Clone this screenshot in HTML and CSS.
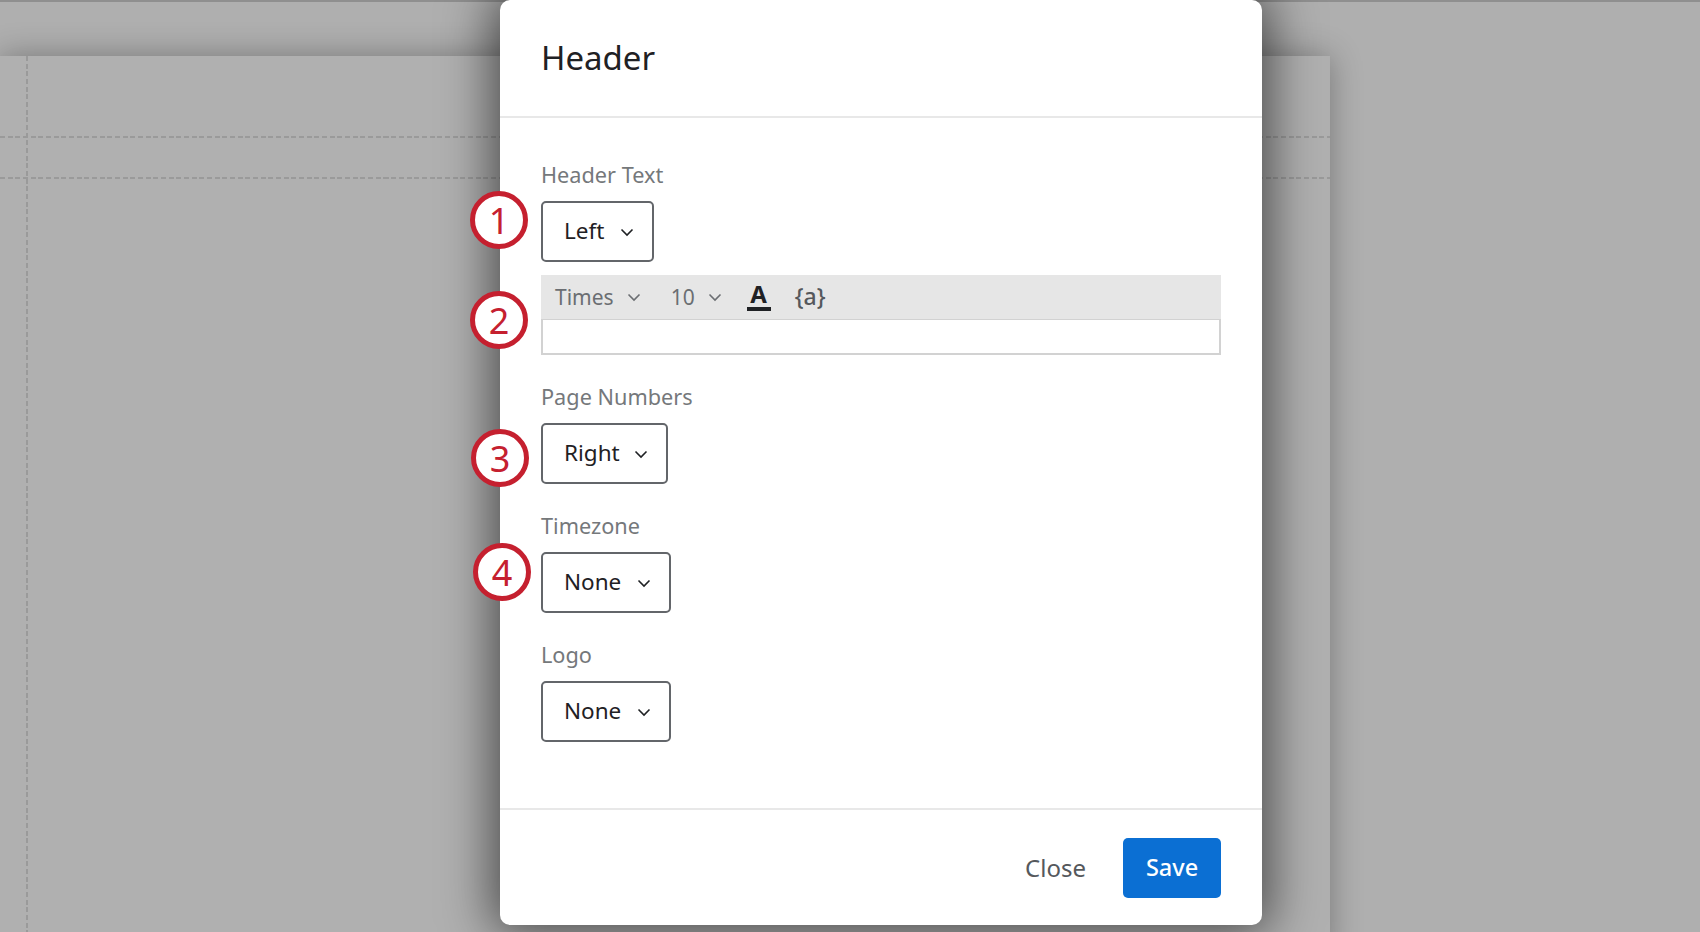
FILE: index.html
```html
<!DOCTYPE html>
<html lang="en">
<head>
<meta charset="utf-8">
<title>Header</title>
<link rel="stylesheet" href="styles.css">
</head>
<body>
<div class="stage">
  <div class="paper">
    <div class="guide-row guide-row-a"></div>
    <div class="guide-row guide-row-b"></div>
    <div class="guide-col"></div>
  </div>
</div>
<div class="modal">
  <header class="modal-head"><h1 class="modal-title">Header</h1></header>
  <main class="modal-body">
    <div class="field">
      <div class="label">Header Text</div>
      <button class="select select-left"><span>Left</span><svg class="chev" viewBox="0 0 14 9"><path d="M1.500 1.500 7 7l5.500-5.500"/></svg></button>
      <div class="editor">
        <div class="toolbar">
          <span class="tool tool-font">Times<svg class="chev chev-grey" viewBox="0 0 14 9"><path d="M1.500 1.500 7 7l5.500-5.500"/></svg></span>
          <span class="tool tool-size">10<svg class="chev chev-grey" viewBox="0 0 14 9"><path d="M1.500 1.500 7 7l5.500-5.500"/></svg></span>
          <span class="tool-color">A</span>
          <span class="tool-piped">{a}</span>
        </div>
        <div class="editor-input"></div>
      </div>
    </div>
    <div class="field">
      <div class="label">Page Numbers</div>
      <button class="select select-right"><span>Right</span><svg class="chev" viewBox="0 0 14 9"><path d="M1.500 1.500 7 7l5.500-5.500"/></svg></button>
    </div>
    <div class="field">
      <div class="label">Timezone</div>
      <button class="select select-none"><span>None</span><svg class="chev" viewBox="0 0 14 9"><path d="M1.500 1.500 7 7l5.500-5.500"/></svg></button>
    </div>
    <div class="field">
      <div class="label">Logo</div>
      <button class="select select-none"><span>None</span><svg class="chev" viewBox="0 0 14 9"><path d="M1.500 1.500 7 7l5.500-5.500"/></svg></button>
    </div>
  </main>
  <footer class="modal-foot">
    <button class="btn-close">Close</button>
    <button class="btn-save">Save</button>
  </footer>
</div>
<div class="callout callout-1">1</div>
<div class="callout callout-2">2</div>
<div class="callout callout-3">3</div>
<div class="callout callout-4">4</div>
</body>
</html>
```
FILE: styles.css
```css
* { box-sizing: border-box; }
html, body { margin: 0; height: 100%; overflow: hidden; }
body { font-family: "Noto Sans", "Open Sans", sans-serif; background: #afafaf; position: relative; }
.stage { height: 932px; border-top: 2px solid #8f8f8f; padding-top: 54px; overflow: hidden; }
.paper { position: relative; width: 1330px; height: 900px; background: #b0b0b0; box-shadow: 0 0 30px rgba(0,0,0,.32); }
.guide-row { position: absolute; left: 0; right: 0; height: 2px; background: repeating-linear-gradient(90deg, #9a9a9a 0 5px, transparent 5px 7.670px); }
.guide-row-a { top: 80px; }
.guide-row-b { top: 121px; }
.guide-col { position: absolute; top: 0; bottom: 0; left: 26px; width: 2px; background: repeating-linear-gradient(180deg, #9a9a9a 0 5px, transparent 5px 7.670px); }

.modal { position: absolute; left: 500px; top: 0; width: 762px; height: 925px; background: #fff; border-radius: 10px; box-shadow: 0 0 50px 8px rgba(0,0,0,.58); display: flex; flex-direction: column; }
.modal-head { height: 118px; border-bottom: 2px solid #e8e8e8; padding: 0 41px 1px; display: flex; align-items: center; }
.modal-title { margin: 0; font-size: 33px; font-weight: 400; color: #1f2124; }
.modal-body { flex: 1; padding: 40px 41px 0; }
.modal-foot { height: 117px; border-top: 2px solid #e8e8e8; padding: 28px 41px 0; display: flex; justify-content: flex-end; align-items: flex-start; gap: 37px; }

.field { margin-bottom: 25px; }
.label { font-size: 21.700px; line-height: 34px; color: #75787b; margin-bottom: 9px; }
.select { height: 61px; display: flex; align-items: center; background: #fff; border: 2px solid #63666a; border-radius: 5px; padding: 0 18px 2px 21px; font: inherit; font-size: 22.500px; color: #1f2124; }
.select-left { width: 113px; }
.select-right { width: 127px; }
.select-none { width: 130px; }
.select span { flex: 1; text-align: left; }
.chev { width: 14px; height: 9px; fill: none; stroke: #1f2124; stroke-width: 1.600; }
.select .chev { margin-top: 4px; }
.editor { margin-top: 13px; width: 680px; }
.toolbar { height: 44px; background: #e6e6e6; display: flex; align-items: center; padding: 0 0 0 14px; color: #6b6e72; font-size: 21px; }
.tool { display: flex; align-items: center; gap: 13px; }
.tool-size { margin-left: 30px; }
.chev-grey { stroke: #6b6e72; }
.tool-color { margin: 0 0 2px 25px; width: 24px; text-align: center; font-size: 24px; font-weight: 700; line-height: 26px; color: #1f2124; border-bottom: 4px solid #1f2124; }
.tool-piped { margin: 0 0 3px 24px; color: #55585c; font-size: 23px; font-weight: 500; }
.editor-input { height: 36px; background: #fff; border: 2px solid #d2d2d2; border-top-width: 1px; }

.btn-close { background: none; border: 0; padding: 0 0 2px; height: 60px; font: inherit; font-size: 24px; color: #55585c; }
.btn-save { width: 98px; height: 60px; background: #0b6fd3; color: #fff; border: 0; border-radius: 5px; padding: 0 0 2px; font: inherit; font-size: 23.500px; font-weight: 500; }

.callout { position: absolute; width: 58px; height: 58px; border: 5px solid #c5202f; border-radius: 50%; background: #fff; color: #c5202f; font-size: 36px; line-height: 50px; text-align: center; }
.callout-1 { left: 470px; top: 191px; }
.callout-2 { left: 470px; top: 291px; }
.callout-3 { left: 471px; top: 429px; }
.callout-4 { left: 473px; top: 543px; }
```
